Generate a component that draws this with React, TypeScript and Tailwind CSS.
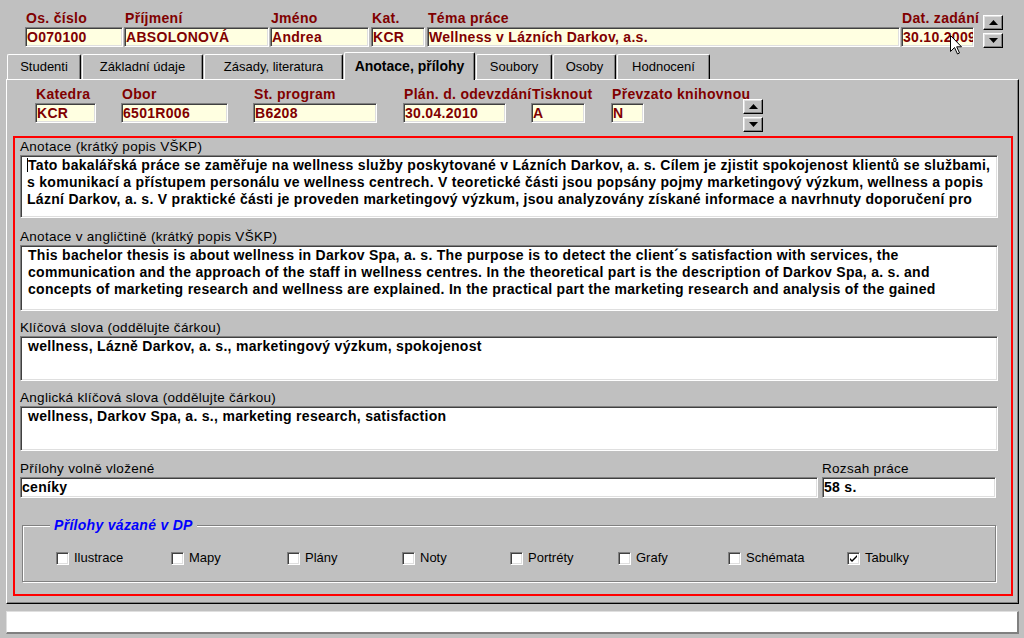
import React from 'react';

// Win95 style bevels
const sunken =
  'border border-t-[#808080] border-l-[#808080] border-b-white border-r-white shadow-[inset_1px_1px_0_#404040,inset_-1px_-1px_0_#dfdfdf]';
const raised =
  'border border-t-white border-l-white border-b-black border-r-black shadow-[inset_-1px_-1px_0_#808080,inset_1px_1px_0_#dfdfdf]';

const topFields = [
  { label: 'Os. číslo', value: 'O070100', cls: 'ml-[25px] w-[98px]' },
  { label: 'Příjmení', value: 'ABSOLONOVÁ', cls: 'ml-[1px] w-[145px]' },
  { label: 'Jméno', value: 'Andrea', cls: 'ml-[1px] w-[99px]' },
  { label: 'Kat.', value: 'KCR', cls: 'ml-[2px] w-[54px]' },
  { label: 'Téma práce', value: 'Wellness v Lázních Darkov, a.s.', cls: 'ml-[2px] w-[473px]' },
  { label: 'Dat. zadání', value: '30.10.2009', cls: 'ml-[1px] w-[73px]' },
];

const rowFields = [
  { label: 'Katedra', value: 'KCR', cls: 'ml-[28px] w-[61px]' },
  { label: 'Obor', value: '6501R006', cls: 'ml-[25px] w-[107px]' },
  { label: 'St. program', value: 'B6208', cls: 'ml-[25px] w-[124px]' },
  { label: 'Plán. d. odevzdání', value: '30.04.2010', cls: 'ml-[26px] w-[103px]' },
  { label: 'Tisknout', value: 'A', cls: 'ml-[25px] w-[54px]' },
  { label: 'Převzato knihovnou', value: 'N', cls: 'ml-[26px] w-[33px]' },
];

const tabs = [
  { name: 'Studenti', cls: 'w-[74px]' },
  { name: 'Základní údaje', cls: 'w-[121px]' },
  { name: 'Zásady, literatura', cls: 'w-[139px]' },
  { name: 'Anotace, přílohy', cls: 'w-[131px]', active: true },
  { name: 'Soubory', cls: 'w-[76px]' },
  { name: 'Osoby', cls: 'w-[63px]' },
  { name: 'Hodnocení', cls: 'w-[93px]' },
];

const checks = [
  { name: 'Ilustrace', cls: 'w-[115px]' },
  { name: 'Mapy', cls: 'w-[116px]' },
  { name: 'Plány', cls: 'w-[115px]' },
  { name: 'Noty', cls: 'w-[108px]' },
  { name: 'Portréty', cls: 'w-[108px]' },
  { name: 'Grafy', cls: 'w-[110px]' },
  { name: 'Schémata', cls: 'w-[119px]' },
  { name: 'Tabulky', cls: 'w-[100px]', checked: true },
];

const anotace = [
  'Tato bakalářská práce se zaměřuje na wellness služby poskytované v Lázních Darkov, a. s. Cílem je zjistit spokojenost klientů se službami,',
  's komunikací a přístupem personálu ve wellness centrech. V teoretické části jsou popsány pojmy marketingový výzkum, wellness a popis',
  'Lázní Darkov, a. s. V praktické části je proveden marketingový výzkum, jsou analyzovány získané informace a navrhnuty doporučení pro',
];

const anotaceEn = [
  'This bachelor thesis is about wellness in Darkov Spa, a. s. The purpose is to detect the client´s satisfaction with services, the',
  'communication and the approach of the staff in wellness centres. In the theoretical part is the description of Darkov Spa, a. s. and',
  'concepts of marketing research and wellness are explained. In the practical part the marketing research and analysis of the gained',
];

const caption = 'text-[13.5px] leading-[16px] tracking-[0.3px] whitespace-nowrap';

function Spin() {
  return (
    <div className="flex flex-col gap-[3px]">
      <div className={`w-[20px] h-[15px] bg-[#c0c0c0] flex items-center justify-center ${raised}`}>
        <svg width="9" height="5" viewBox="0 0 9 5">
          <path d="M0 5 L4.5 0 L9 5 Z" fill="#000" />
        </svg>
      </div>
      <div className={`w-[20px] h-[15px] bg-[#c0c0c0] flex items-center justify-center ${raised}`}>
        <svg width="9" height="5" viewBox="0 0 9 5">
          <path d="M0 0 L9 0 L4.5 5 Z" fill="#000" />
        </svg>
      </div>
    </div>
  );
}

function YellowField({ label, value, cls }: { label: string; value: string; cls: string }) {
  return (
    <div className={`flex flex-col shrink-0 ${cls}`}>
      <div className="pl-px text-[14px] leading-[16px] tracking-[0.3px] font-bold text-[#800000] whitespace-nowrap">{label}</div>
      <div
        className={`mt-px h-[20px] bg-[#ffffe1] ${sunken} px-px text-[14px] leading-[18px] tracking-[0.3px] font-bold text-[#800000] overflow-hidden whitespace-nowrap`}
      >
        {value}
      </div>
    </div>
  );
}

function Memo({ lines, h, caret }: { lines: string[]; h: string; caret?: boolean }) {
  return (
    <div className={`w-[978px] ${h} bg-white ${sunken} pl-[6px] pt-[1px] overflow-hidden`}>
      {lines.map((l, i) => (
        <div key={i} className="text-[14px] leading-[17px] tracking-[0.29px] font-bold text-black whitespace-nowrap">
          {caret && i === 0 && <span className="inline-block w-px h-[14px] bg-black align-[-2px]" />}
          {!caret && <span className="inline-block w-px" />}
          {l}
        </div>
      ))}
    </div>
  );
}

export default function App() {
  return (
    <div className="relative w-[1024px] h-[638px] overflow-hidden bg-[#c0c0c0] pt-[10px] font-['Liberation_Sans',Arial,sans-serif] text-black">
      {/* horní řádek se studentem */}
      <div className="flex items-start">
        {topFields.map((f) => (
          <YellowField key={f.label} {...f} />
        ))}
        <div className="ml-[9px] mt-[5px]">
          <Spin />
        </div>
      </div>

      {/* záložky */}
      <div className="flex items-end gap-[1px] mt-[4px] pl-[7px] h-[27px]">
        {tabs.map((t) =>
          t.active ? (
            <div
              key={t.name}
              className={`relative z-10 -mb-px h-[28px] bg-[#c0c0c0] border-t border-l border-r border-t-white border-l-white border-r-black shadow-[inset_-1px_0_0_#808080] rounded-t-[2px] flex items-center justify-center text-[14px] font-bold whitespace-nowrap ${t.cls}`}
            >
              {t.name}
            </div>
          ) : (
            <div
              key={t.name}
              className={`h-[25px] border-t border-l border-r border-t-white border-l-white border-r-black shadow-[inset_-1px_0_0_#808080] rounded-t-[2px] flex items-center justify-center text-[13px] whitespace-nowrap ${t.cls}`}
            >
              {t.name}
            </div>
          )
        )}
      </div>

      {/* panel záložky */}
      <div className="ml-[6px] w-[1013px] h-[525px] border border-t-white border-l-white border-b-black border-r-black shadow-[inset_-1px_-1px_0_#808080] pt-[6px]">
        <div className="flex items-start h-[38px]">
          {rowFields.map((f) => (
            <YellowField key={f.label} {...f} />
          ))}
          <div className="ml-[99px] mt-[13px]">
            <Spin />
          </div>
        </div>

        <div className="ml-[6px] mt-[12px] w-[1000px] h-[460px] border-2 border-[#ff0000] px-[5px] pt-[1px]">
          <div className={caption}>Anotace (krátký popis VŠKP)</div>
          <Memo lines={anotace} h="h-[63px]" caret />

          <div className={`mt-[11px] ${caption}`}>Anotace v angličtině (krátký popis VŠKP)</div>
          <Memo lines={anotaceEn} h="h-[66px]" />

          <div className={`mt-[9px] ${caption}`}>Klíčová slova (oddělujte čárkou)</div>
          <Memo lines={['wellness, Lázně Darkov, a. s., marketingový výzkum, spokojenost']} h="h-[45px]" />

          <div className={`mt-[9px] ${caption}`}>Anglická klíčová slova (oddělujte čárkou)</div>
          <Memo lines={['wellness, Darkov Spa, a. s., marketing research, satisfaction']} h="h-[45px]" />

          <div className="mt-[10px] flex items-start">
            <div className="w-[798px] flex flex-col">
              <div className={caption}>Přílohy volně vložené</div>
              <div className={`h-[21px] bg-white ${sunken} pl-[1px] text-[14px] leading-[18px] tracking-[0.29px] font-bold`}>ceníky</div>
            </div>
            <div className="ml-[4px] w-[174px] flex flex-col">
              <div className={caption}>Rozsah práce</div>
              <div className={`h-[21px] bg-white ${sunken} pl-[1px] text-[14px] leading-[18px] tracking-[0.29px] font-bold`}>58 s.</div>
            </div>
          </div>

          {/* přílohy vázané */}
          <div className="relative mt-[27px] ml-[2px] w-[974px] h-[57px] border border-[#808080] shadow-[1px_1px_0_white,inset_1px_1px_0_white]">
            <span className="absolute left-[27px] -top-[10px] px-[4px] bg-[#c0c0c0] text-[14px] leading-[18px] tracking-[0.3px] font-bold italic text-[#0000ff] whitespace-nowrap">
              Přílohy vázané v DP
            </span>
            <div className="flex items-center pl-[33px] pt-[24px]">
              {checks.map((c) => (
                <div key={c.name} className={`flex items-center shrink-0 h-[16px] ${c.cls}`}>
                  <span className={`w-[13px] h-[13px] bg-white ${sunken} flex items-center justify-center`}>
                    {c.checked && (
                      <svg width="7" height="7" viewBox="0 0 7 7">
                        <path d="M0 3 L0 5 L2 7 L7 2 L7 0 L2 5 Z" fill="#000" />
                      </svg>
                    )}
                  </span>
                  <span className="ml-[5px] text-[13px] leading-[16px] whitespace-nowrap">{c.name}</span>
                </div>
              ))}
            </div>
          </div>
        </div>
      </div>

      {/* stavový řádek */}
      <div className="ml-[6px] mt-[7px] w-[1013px] h-[23px] bg-white border border-t-[#dfdfdf] border-l-[#dfdfdf] border-b-2 border-r-2 border-b-[#808080] border-r-[#808080]" />

      {/* kurzor myši */}
      <svg className="absolute left-[950px] top-[35px]" width="13" height="20" viewBox="0 0 13 20">
        <path d="M0.5 0.5 L0.5 16.5 L4.5 12.5 L7.5 19 L9.5 18 L6.7 11.8 L11.5 11.8 Z" fill="#fff" stroke="#000" strokeWidth="1" />
      </svg>
    </div>
  );
}
